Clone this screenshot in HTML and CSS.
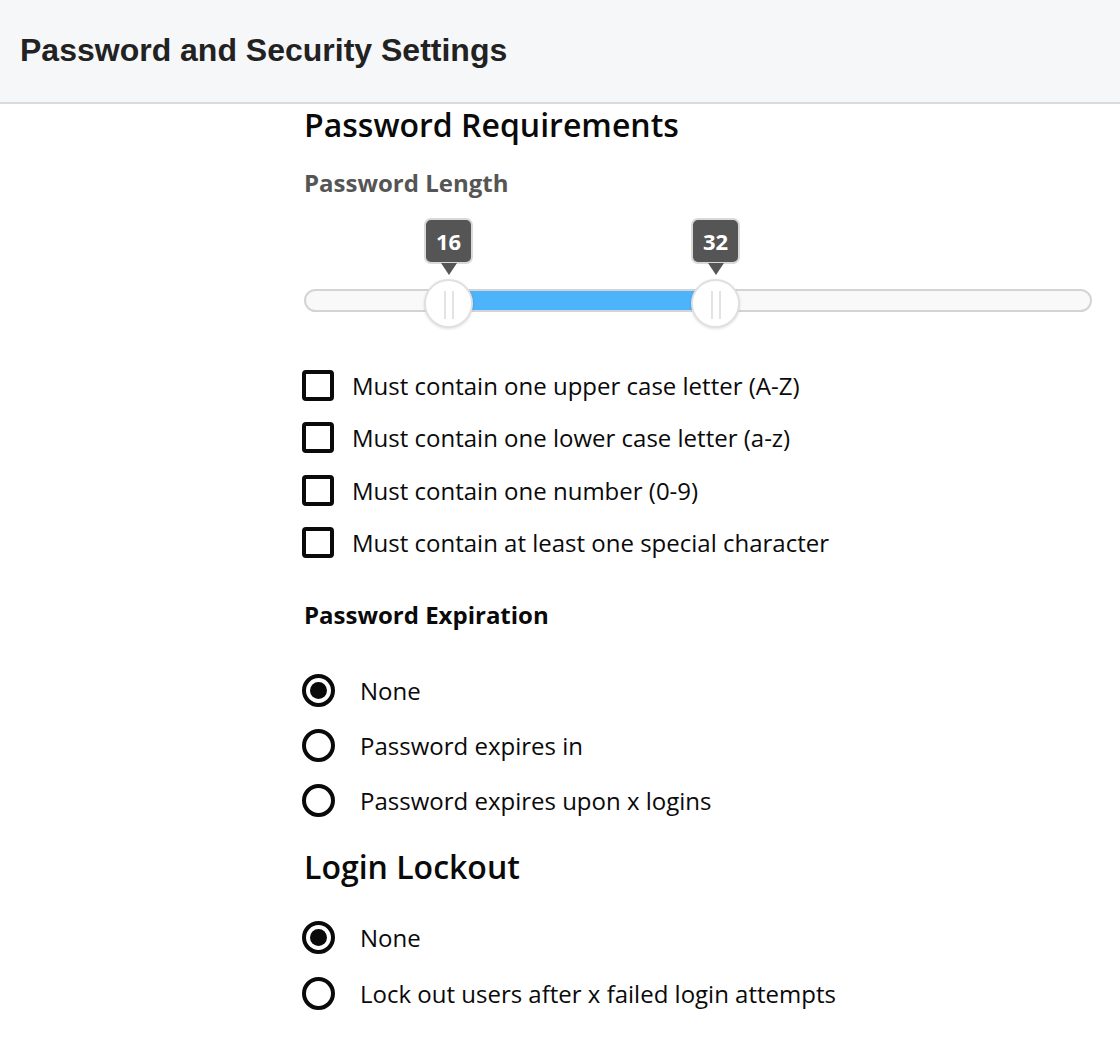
FILE: index.html
```html
<!DOCTYPE html>
<html lang="en">
<head>
<meta charset="utf-8">
<title>Password and Security Settings</title>
<link rel="stylesheet" href="styles.css">
</head>
<body>
<header class="topbar">
  <h1 class="title">Password and Security Settings</h1>
</header>
<main class="main">
  <h2 class="section-title">Password Requirements</h2>
  <h3 class="field-label">Password Length</h3>
  <div class="slider">
    <div class="track">
      <div class="fill" style="left:144px;width:267px"></div>
    </div>
    <div class="knob" style="left:144px">
      <div class="tip">16</div>
      <div class="handle"><span class="grip"></span><span class="grip"></span></div>
    </div>
    <div class="knob" style="left:411px">
      <div class="tip">32</div>
      <div class="handle"><span class="grip"></span><span class="grip"></span></div>
    </div>
  </div>
  <ul class="checks">
    <li class="check-row"><span class="box"></span><span class="label">Must contain one upper case letter (A-Z)</span></li>
    <li class="check-row"><span class="box"></span><span class="label">Must contain one lower case letter (a-z)</span></li>
    <li class="check-row"><span class="box"></span><span class="label">Must contain one number (0-9)</span></li>
    <li class="check-row"><span class="box"></span><span class="label">Must contain at least one special character</span></li>
  </ul>
  <h3 class="group-label">Password Expiration</h3>
  <ul class="radios">
    <li class="radio-row"><span class="radio checked"></span><span class="label">None</span></li>
    <li class="radio-row"><span class="radio"></span><span class="label">Password expires in</span></li>
    <li class="radio-row"><span class="radio"></span><span class="label">Password expires upon x logins</span></li>
  </ul>
  <h2 class="lock-title">Login Lockout</h2>
  <ul class="radios lock">
    <li class="radio-row"><span class="radio checked"></span><span class="label">None</span></li>
    <li class="radio-row"><span class="radio"></span><span class="label">Lock out users after x failed login attempts</span></li>
  </ul>
</main>
</body>
</html>
```

FILE: styles.css
```css
* { box-sizing: border-box; }
html, body { margin: 0; padding: 0; background: #fff; }
body { font-family: "Open Sans", "Noto Sans", sans-serif; color: #0a0a0a; }

.topbar {
  height: 104px;
  background: #f6f7f9;
  border-bottom: 2px solid #d6dce1;
  display: flex;
  align-items: center;
  padding: 0 20px 2px;
}
.title {
  margin: 0;
  font-family: "Liberation Sans", Arial, sans-serif;
  font-weight: 700;
  font-size: 32px;
  color: #222;
}

.main { padding: 0 28px 40px 304px; }

.section-title {
  margin: 0;
  font-size: 32px;
  line-height: 42px;
  font-weight: 600;
  color: #0a0a0a;
}
.field-label {
  margin: 21px 0 0;
  font-size: 24px;
  line-height: 32px;
  font-weight: 700;
  color: #555;
}

.slider {
  position: relative;
  height: 98px;
  margin-top: 10px;
  padding-top: 90px;
}
.track {
  position: relative;
  height: 23px;
  margin-top: -10px;
  border: 2px solid #d4d4d4;
  border-radius: 12px;
  background: #f9f9f9;
}
.fill {
  position: absolute;
  top: 0;
  bottom: 0;
  background: #4db3fb;
}
.knob {
  position: absolute;
  top: 8.6px;
  width: 0;
}
.tip {
  position: absolute;
  left: -24px;
  top: 0;
  width: 49px;
  height: 46px;
  background: #555;
  border: 2px solid #d9d9d9;
  border-radius: 7px;
  color: #fff;
  font-weight: 700;
  font-size: 22px;
  line-height: 42px;
  text-align: center;
}
.tip::after {
  content: "";
  position: absolute;
  left: 50%;
  bottom: -13px;
  margin-left: -8px;
  border-left: 8px solid transparent;
  border-right: 8px solid transparent;
  border-top: 12px solid #555;
}
.handle {
  position: absolute;
  left: -24px;
  top: 61px;
  width: 49px;
  height: 49px;
  border-radius: 50%;
  background: #fff;
  border: 2px solid #e0e0e0;
  box-shadow: 0 1px 3px rgba(0,0,0,0.12);
  display: flex;
  justify-content: center;
  gap: 6px;
  padding-top: 10px;
}
.grip {
  width: 2px;
  height: 28px;
  background: #e3e3e3;
}

.checks, .radios { list-style: none; margin: 0; padding: 0; }
.checks { margin-top: 52px; }
.check-row {
  display: flex;
  align-items: center;
  gap: 18px;
  height: 52.5px;
}
.box {
  flex: none;
  width: 32px;
  height: 31px;
  margin-left: -2px;
  border: 4px solid #0a0a0a;
  border-radius: 4px;
}
.label {
  font-size: 24px;
  color: #0a0a0a;
}

.group-label {
  margin: 30px 0 0;
  font-size: 24px;
  line-height: 32px;
  font-weight: 700;
}
.radios { margin-top: 32px; }
.radio-row {
  display: flex;
  align-items: center;
  gap: 25px;
  height: 55px;
}
.radio {
  flex: none;
  width: 33px;
  height: 33px;
  margin-left: -2px;
  border: 4px solid #0a0a0a;
  border-radius: 50%;
  display: flex;
  align-items: center;
  justify-content: center;
}
.radio.checked::after {
  content: "";
  width: 17px;
  height: 17px;
  border-radius: 50%;
  background: #0a0a0a;
}
.lock-title {
  margin: 18px 0 0;
  font-size: 32px;
  line-height: 42px;
  font-weight: 600;
}
.radios.lock { margin-top: 21px; }
.radios.lock .radio-row { height: 56px; }
```
